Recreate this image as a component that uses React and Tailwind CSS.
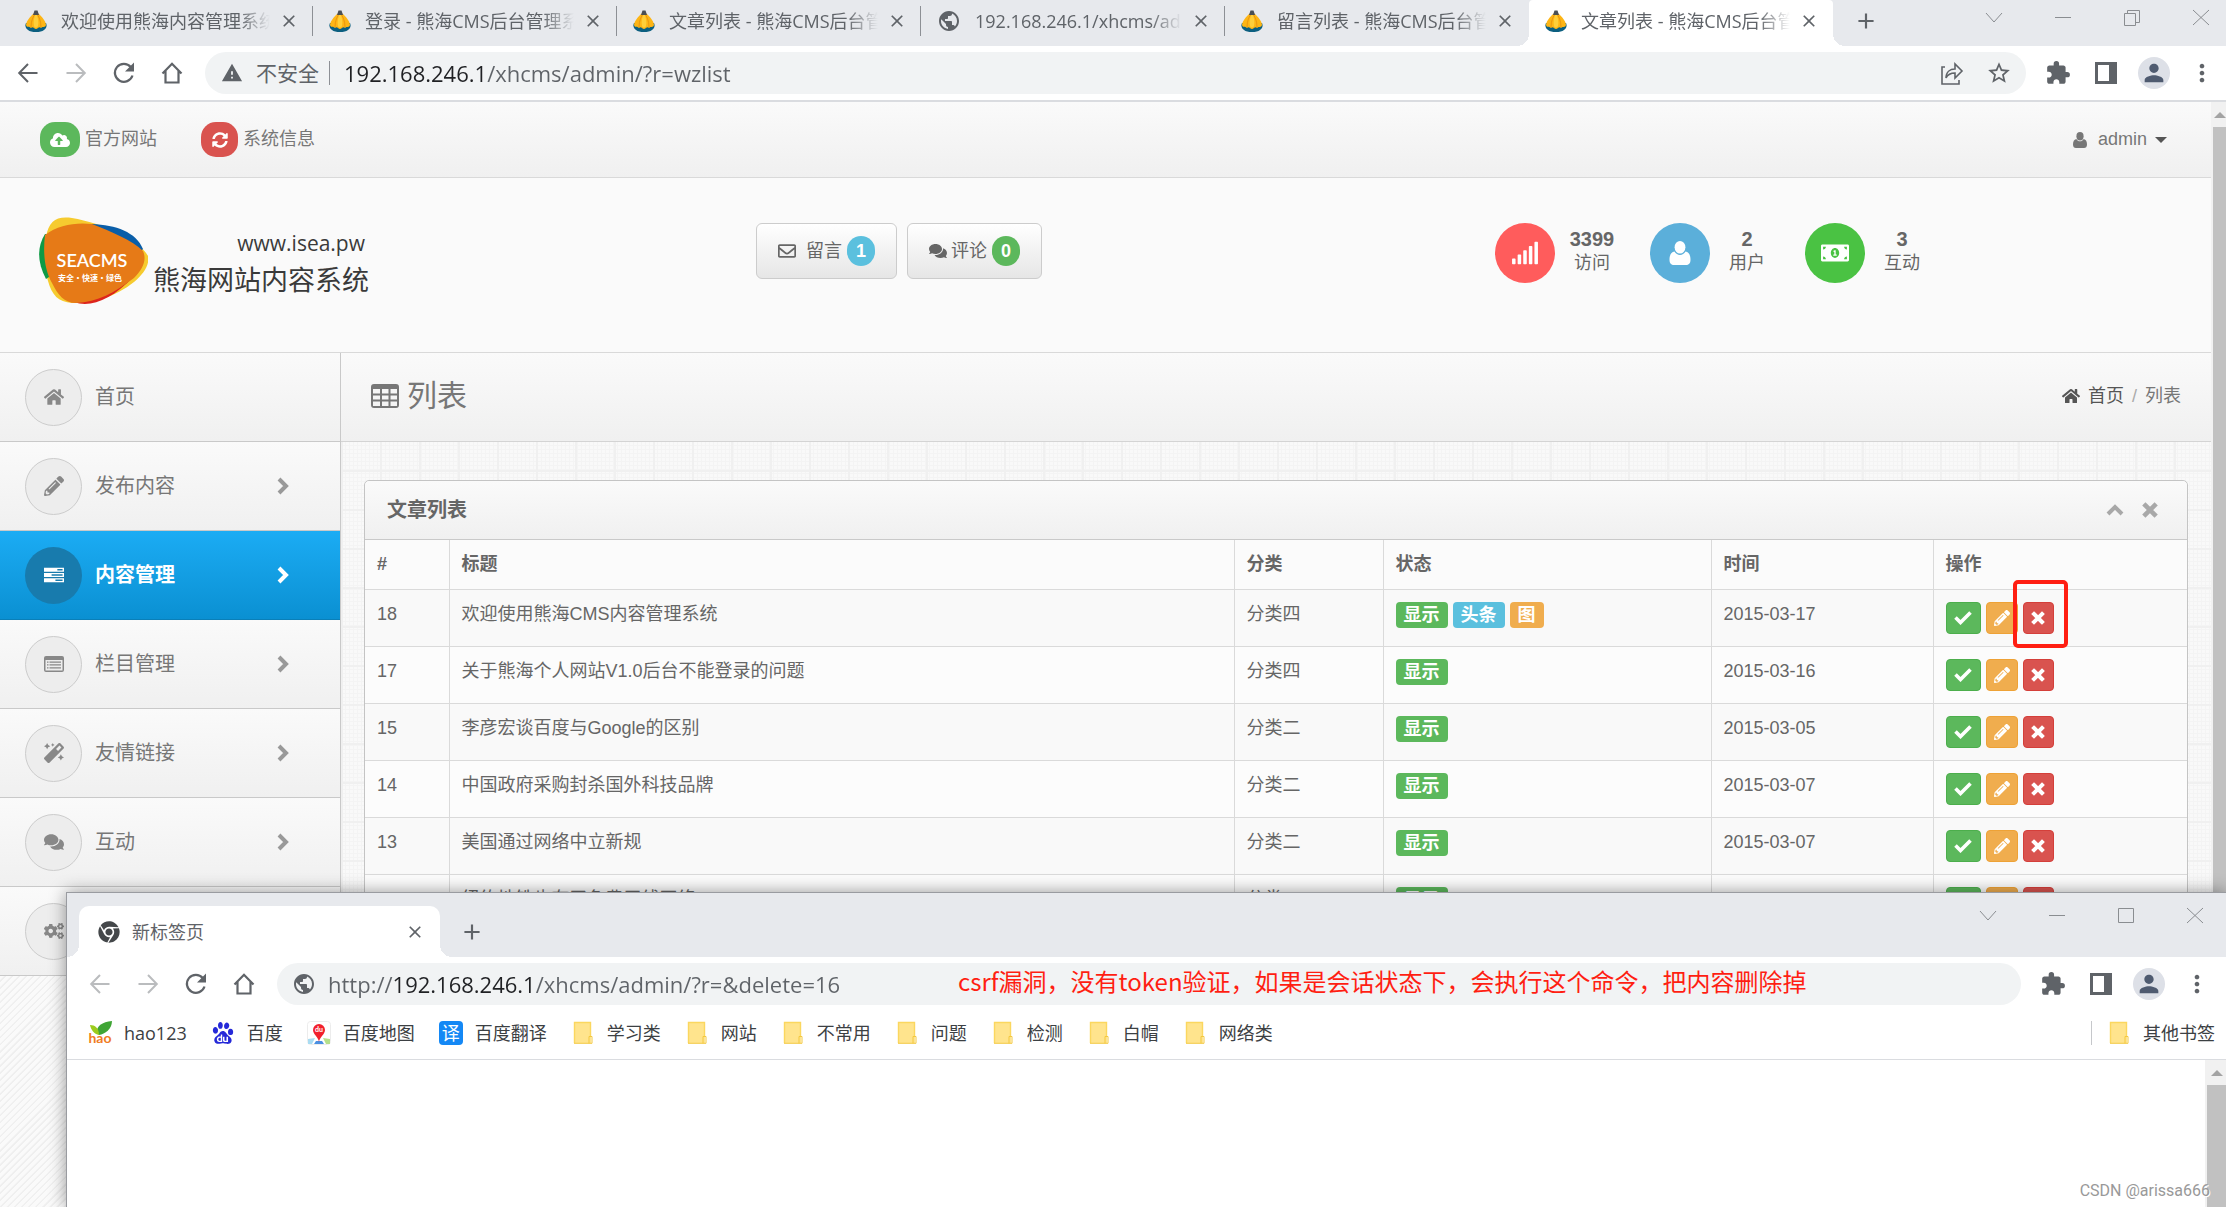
import {
  FaChrome,
  FaCloudUploadAlt,
  FaCogs,
  FaComments,
  FaHome,
  FaMagic,
  FaMoneyBillAlt,
  FaPencilAlt,
  FaRegEnvelope,
  FaSignal,
  FaSyncAlt,
} from "react-icons/fa";
import { MdAdd, MdClose, MdExtension, MdMoreVert, MdPerson, MdPublic, MdStarBorder, MdWarning } from "react-icons/md";
import { SiBaidu } from "react-icons/si";

const tabs = [
  { title: "欢迎使用熊海内容管理系统" },
  { title: "登录 - 熊海CMS后台管理系统" },
  { title: "文章列表 - 熊海CMS后台管理" },
  { title: "192.168.246.1/xhcms/admin", globe: true },
  { title: "留言列表 - 熊海CMS后台管理", last: true },
  { title: "文章列表 - 熊海CMS后台管理", active: true },
];

const menu = [
  { label: "首页", icon: FaHome, leaf: true },
  { label: "发布内容", icon: FaPencilAlt },
  { label: "内容管理", icon: TasksIcon, active: true },
  { label: "栏目管理", icon: ListAltIcon },
  { label: "友情链接", icon: FaMagic },
  { label: "互动", icon: FaComments },
  { label: "设置", icon: FaCogs },
];

const stats = [
  { value: "3399", label: "访问", icon: FaSignal, color: "bg-[#ff5c5c]" },
  { value: "2", label: "用户", icon: UserIcon, color: "bg-[#5bafda]" },
  { value: "3", label: "互动", icon: FaMoneyBillAlt, color: "bg-[#4ac243]" },
];

const articles = [
  { id: 18, title: "欢迎使用熊海CMS内容管理系统", category: "分类四", date: "2015-03-17", tags: ["显示", "头条", "图"] },
  { id: 17, title: "关于熊海个人网站V1.0后台不能登录的问题", category: "分类四", date: "2015-03-16", tags: ["显示"] },
  { id: 15, title: "李彦宏谈百度与Google的区别", category: "分类二", date: "2015-03-05", tags: ["显示"] },
  { id: 14, title: "中国政府采购封杀国外科技品牌", category: "分类二", date: "2015-03-07", tags: ["显示"] },
  { id: 13, title: "美国通过网络中立新规", category: "分类二", date: "2015-03-07", tags: ["显示"] },
  { id: 12, title: "纽约地铁也有了免费无线网络", category: "分类二", date: "2015-03-07", tags: ["显示"] },
];

const tagColors = {
  显示: "bg-[#5cb85c]",
  头条: "bg-[#5bc0de]",
  图: "bg-[#f0ad4e]",
};

const bookmarks = [
  { label: "hao123", icon: HaoIcon },
  { label: "百度", icon: BaiduIcon },
  { label: "百度地图", icon: MapIcon },
  { label: "百度翻译", icon: TranslateIcon },
  { label: "学习类", icon: FolderIcon },
  { label: "网站", icon: FolderIcon },
  { label: "不常用", icon: FolderIcon },
  { label: "问题", icon: FolderIcon },
  { label: "检测", icon: FolderIcon },
  { label: "白帽", icon: FolderIcon },
  { label: "网络类", icon: FolderIcon },
];

/* ---------- icons ---------- */

function Favicon() {
  return (
    <svg viewBox="0 0 22 22" className="size-[22px] shrink-0">
      <path d="M1 13c-2 4 1 9 10 9s12-5 10-9z" fill="#0c5f80" />
      <path d="M11 2C7 4 1 11 1 15c1 3 3 1 5 3 2-2 3 1 5 1s3-3 5-1c2-2 4 0 5-3 0-4-6-11-10-13z" fill="#fdb515" />
      <path d="M11 3c-2 4-3 9-2 13 1 2 3 2 4 0 1-4 0-9-2-13z" fill="#ffcf3a" />
      <path d="M11 3c-3 3-5 8-5 14M11 3c3 3 5 8 5 14" fill="none" stroke="#e58e0c" strokeWidth=".8" />
      <path d="M8 5 9.500.500h3L14 5z" fill="#4a4f55" />
    </svg>
  );
}

function BackIcon() {
  return (
    <svg viewBox="0 0 24 24" className="size-6" fill="none" stroke="currentColor" strokeWidth="2">
      <path d="M21.500 12h-18M12 3l-8.800 9 8.800 9" />
    </svg>
  );
}

function ForwardIcon() {
  return (
    <svg viewBox="0 0 24 24" className="size-6" fill="none" stroke="currentColor" strokeWidth="2">
      <path d="M2.500 12h18M12 3l8.800 9-8.800 9" />
    </svg>
  );
}

function ReloadIcon() {
  return (
    <svg viewBox="0 0 24 24" className="size-6">
      <path d="M20.500 14.500A9 9 0 1 1 18.800 6" fill="none" stroke="currentColor" strokeWidth="2.200" />
      <path d="M22 1.500v9h-9z" fill="currentColor" />
    </svg>
  );
}

function HomeOutlineIcon() {
  return (
    <svg viewBox="0 0 24 24" className="size-6" fill="none" stroke="currentColor" strokeWidth="2.200">
      <path d="M2.500 12.500 12 2.800l9.500 9.700M5.500 10v11.500h13V10" />
    </svg>
  );
}

function ShareIcon() {
  return (
    <svg viewBox="0 0 24 24" className="size-6" fill="none" stroke="currentColor" strokeWidth="1.600">
      <path d="M5 6H2v17h17v-4" />
      <path d="M6 17c0-6 4-9 9-9V3l7 7-7 7v-5c-4 0-7 1-9 5z" />
    </svg>
  );
}

function PanelIcon() {
  return (
    <svg viewBox="0 0 22 22" className="size-[22px]">
      <path d="M0 0h22v22H0zM3 3v16h11V3z" fill="currentColor" fillRule="evenodd" />
    </svg>
  );
}

function CheckIcon() {
  return (
    <svg viewBox="0 0 18 14" className="h-[14px] w-[18px]" fill="none" stroke="currentColor" strokeWidth="3.600">
      <path d="M1.500 6.500l5 5L16.500 1.500" />
    </svg>
  );
}

function CrossIcon({ className }) {
  return (
    <svg viewBox="0 0 14 14" className={className} fill="none" stroke="currentColor" strokeWidth="4" strokeLinecap="square">
      <path d="M3 3l8 8M11 3l-8 8" />
    </svg>
  );
}

function ChevronRightIcon({ className }) {
  return (
    <svg viewBox="0 0 12 18" className={className} fill="none" stroke="currentColor" strokeWidth="4">
      <path d="M2 2l7 7-7 7" />
    </svg>
  );
}

function ChevronUpIcon({ className }) {
  return (
    <svg viewBox="0 0 18 12" className={className} fill="none" stroke="currentColor" strokeWidth="4">
      <path d="M2 10l7-7 7 7" />
    </svg>
  );
}

function UserIcon({ className }) {
  return (
    <svg viewBox="0 0 16 16" className={className} fill="currentColor">
      <ellipse cx="8" cy="4.200" rx="3.600" ry="4.200" />
      <path d="M4.300 7C2 7.500 1 9.500 1 12.500 1 15 2.200 16 4 16h8c1.800 0 3-1 3-3.500 0-3-1-5-3.300-5.500-1 1.500-2.200 2.300-3.700 2.300S5.300 8.500 4.300 7z" />
    </svg>
  );
}

function TasksIcon({ className }) {
  return (
    <svg viewBox="0 0 21 16" className={className} fill="currentColor">
      <path
        fillRule="evenodd"
        d="M0 .5h21v4H0zm14 1.300v1.400h5.500V1.800zM0 6h21v4H0zm8 1.300v1.400h11.500V7.300zM0 11.500h21v4H0zm12 1.300v1.400h7.500v-1.400z"
      />
    </svg>
  );
}

function ListAltIcon({ className }) {
  return (
    <svg viewBox="0 0 20 16" className={className} fill="currentColor">
      <path
        fillRule="evenodd"
        d="M2 0h16a2 2 0 0 1 2 2v12a2 2 0 0 1-2 2H2a2 2 0 0 1-2-2V2a2 2 0 0 1 2-2zM1.500 4v10.500h17V4zM3 5.500h1.500v1.300H3zm2.500 0H17v1.300H5.500zM3 8.300h1.500v1.300H3zm2.500 0H17v1.300H5.500zM3 11.200h1.500v1.300H3zm2.500 0H17v1.300H5.500z"
      />
    </svg>
  );
}

function TableIcon() {
  return (
    <svg viewBox="0 0 28 24" className="h-6 w-7" fill="currentColor">
      <path
        fillRule="evenodd"
        d="M3 0h22a3 3 0 0 1 3 3v18a3 3 0 0 1-3 3H3a3 3 0 0 1-3-3V3a3 3 0 0 1 3-3zM2 5v4.500h7V5zm9 0v4.500h6.500V5zm8.500 0v4.500H26V5zM2 11.500v4h7v-4zm9 0v4h6.500v-4zm8.500 0v4H26v-4zM2 17.500V22h7v-4.500zm9 0V22h6.500v-4.500zm8.500 0V22H26v-4.500z"
      />
    </svg>
  );
}

function Logo() {
  return (
    <svg viewBox="0 0 110 88" className="h-[88px] w-[110px]">
      <path d="M8 20C11 4 18-1 34 1c30 5 68 22 76 38 2 8-4 18-14 26-20 16-44 22-62 21C20 85 14 78 10 64 5 48 4 36 8 20z" fill="#f6cb2f" />
      <path d="M7 17C-1 30-1 45 8 62l6-4V18z" fill="#0d9a45" />
      <path d="M54 7c24 1 44 8 51 25l-4 4C86 24 70 16 52 10z" fill="#0a5ea8" />
      <path d="M36 85c16 6 38-2 60-26l-8-4-54 26z" fill="#dd241c" />
      <path d="M7 18C20 8 38 5 54 7c20 8 40 16 51 27 4 9 0 18-9 27-20 15-36 24-58 25-12 0-18-8-24-20C6 52 5 34 7 18z" fill="#e67a17" />
      <text x="54" y="50" textAnchor="middle" fill="#fff" fontSize="18" fontWeight="600" fontFamily="Lato, sans-serif">
        SEACMS
      </text>
      <text x="52" y="64" textAnchor="middle" fill="#fff" fontSize="8" fontWeight="700" fontFamily="'Noto Sans CJK SC', sans-serif">
        安全•快速•绿色
      </text>
    </svg>
  );
}

function HaoIcon() {
  return (
    <svg viewBox="0 0 24 24" className="size-6">
      <path d="M9 12C8 5 14 1 24 0c0 8-7 13-13 14z" fill="#3fa535" />
      <path d="M2 4c5 0 9 3 9 10C6 13 3 9 2 4z" fill="#9ccb1c" />
      <text x="12" y="22" textAnchor="middle" fill="#f07c22" fontSize="14" fontWeight="700" fontFamily="Lato, sans-serif">
        hao
      </text>
    </svg>
  );
}

function BaiduIcon() {
  return <SiBaidu className="size-[22px] text-[#2529d8]" />;
}

function MapIcon() {
  return (
    <svg viewBox="0 0 24 24" className="size-6">
      <rect x=".5" y=".5" width="23" height="23" rx="3" fill="#fff" stroke="#ececec" />
      <path d="M1 18l7-1-3 6H1z" fill="#a9dcf2" />
      <path d="M23 18l-7-1 3 6h4z" fill="#b5e08a" />
      <path d="M9 20h6l2 3H7z" fill="#4a90e2" />
      <path d="M12 3a6 6 0 0 0-6 6c0 4.500 5.500 7 6 12 .5-5 6-7.500 6-12a6 6 0 0 0-6-6z" fill="#f2202c" />
      <text x="12" y="11" textAnchor="middle" fill="#fff" fontSize="7" fontWeight="700" fontFamily="Lato, sans-serif">
        du
      </text>
    </svg>
  );
}

function TranslateIcon() {
  return (
    <span className="flex size-6 items-center justify-center rounded-[4px] bg-[#1488f5] text-[18px] leading-6 text-white">译</span>
  );
}

function FolderIcon() {
  return (
    <svg viewBox="0 0 24 24" className="size-6">
      <path d="M3 1h17v21H3z" fill="#ffe48d" />
      <path d="M3.500 22V1.500h16V15" fill="none" stroke="#fbd75f" strokeWidth="1.400" />
      <path d="M3 22.300h18v-6.800h-3v6.800" fill="none" stroke="#f3c83f" />
    </svg>
  );
}

/* ---------- browser chrome ---------- */

function WindowControls({ restored }) {
  return (
    <div className="flex gap-[49px] text-[#8a8d91]">
      {[
        <path key="menu" d="M2 5l8 9 8-9" />,
        <path key="min" d="M2 9.500h16" />,
        restored ? (
          <path key="max" d="M2.500 5.500h11v12h-11zM5.500 5V2.500h12v12H14" />
        ) : (
          <path key="max" d="M2.500 2.500h15v14h-15z" />
        ),
        <path key="close" d="M2 2l16 15M18 2L2 17" />,
      ].map((shape) => (
        <button key={shape.key} type="button" aria-label={shape.key}>
          <svg viewBox="0 0 20 18" className="h-[18px] w-5" fill="none" stroke="currentColor">
            {shape}
          </svg>
        </button>
      ))}
    </div>
  );
}

function NavButtons({ canGoBack }) {
  return (
    <div className="mr-[9px] flex text-[#5f6368]">
      <button type="button" aria-label="back" className={canGoBack ? "flex w-12 justify-center" : "flex w-12 justify-center text-[#babcbe]"}>
        <BackIcon />
      </button>
      <button type="button" aria-label="forward" className="flex w-12 justify-center text-[#babcbe]">
        <ForwardIcon />
      </button>
      <button type="button" aria-label="reload" className="flex w-12 justify-center">
        <ReloadIcon />
      </button>
      <button type="button" aria-label="home" className="flex w-12 justify-center">
        <HomeOutlineIcon />
      </button>
    </div>
  );
}

function ToolbarActions() {
  return (
    <div className="ml-2 flex items-center text-[#5f6368]">
      <button type="button" aria-label="extensions" className="flex w-12 justify-center">
        <MdExtension className="size-[26px]" />
      </button>
      <button type="button" aria-label="side panel" className="flex w-12 justify-center">
        <PanelIcon />
      </button>
      <button type="button" aria-label="profile" className="flex w-12 justify-center">
        <span className="flex size-8 items-center justify-center rounded-full bg-[#dde0e7]">
          <MdPerson className="size-7 text-[#4f5b70]" />
        </span>
      </button>
      <button type="button" aria-label="more" className="flex w-12 justify-center">
        <MdMoreVert className="size-7" />
      </button>
    </div>
  );
}

function Scrollbar() {
  return (
    <div className="flex flex-1 flex-col bg-[#f1f1f1] pl-[2px]">
      <div className="flex h-[25px] items-center justify-center">
        <svg viewBox="0 0 12 6" className="h-[6px] w-3">
          <path d="M0 6l6-6 6 6z" fill="#a3a3a3" />
        </svg>
      </div>
      <div className="flex-1 bg-[#c1c1c1]" />
    </div>
  );
}

function TabStrip() {
  return (
    <div className="flex h-[46px] shrink-0 bg-[#e7e9ed] pl-[9px]">
      {tabs.map((tab, i) => (
        <div
          key={i}
          className={
            tab.active
              ? "relative flex w-[304px] items-center rounded-t bg-white pb-1 pl-4 before:absolute before:bottom-0 before:-left-3 before:size-3 before:bg-[radial-gradient(circle_at_0_0,transparent_12px,#fff_12px)] after:absolute after:-right-3 after:bottom-0 after:size-3 after:bg-[radial-gradient(circle_at_100%_0,transparent_12px,#fff_12px)]"
              : "flex w-[304px] items-center pb-1 pl-4"
          }
        >
          {tab.globe ? <MdPublic className="size-6 shrink-0 text-[#5f6368]" /> : <Favicon />}
          <span className="ml-[14px] flex-1 overflow-hidden text-[18px] leading-6 whitespace-nowrap text-[#5f6368] [mask-image:linear-gradient(to_right,#000_85%,transparent)]">
            {tab.title}
          </span>
          <button type="button" aria-label="close tab" className="mr-[13px] ml-[9px] text-[#5f6368]">
            <MdClose className="size-5" />
          </button>
          <span className={tab.active || tab.last ? "h-[30px] w-px" : "h-[30px] w-px bg-[#8d9095]"} />
        </div>
      ))}
      <button type="button" aria-label="new tab" className="ml-5 flex items-center pb-1 text-[#5f6368]">
        <MdAdd className="size-[26px]" />
      </button>
      <div className="ml-auto pt-2 pr-[15px]">
        <WindowControls restored />
      </div>
    </div>
  );
}

/* ---------- admin page ---------- */

function TopBar() {
  return (
    <div className="flex h-[76px] items-center border-b border-[#d9d9d9] bg-linear-to-b from-[#fafafa] to-[#f0f0f0] px-10 text-[18px] text-[#777]">
      <a href="#" className="flex items-center gap-[5px]">
        <span className="flex h-[35px] w-10 items-center justify-center rounded-[15px] bg-[#5cb85c] text-white">
          <FaCloudUploadAlt className="size-5" />
        </span>
        官方网站
      </a>
      <a href="#" className="ml-11 flex items-center gap-[5px]">
        <span className="flex h-[35px] w-[37px] items-center justify-center rounded-[15px] bg-[#d9534f] text-white">
          <FaSyncAlt className="size-4" />
        </span>
        系统信息
      </a>
      <button type="button" className="mr-1 ml-auto flex items-center">
        <UserIcon className="size-4" />
        <span className="ml-[10px]">admin</span>
        <svg viewBox="0 0 12 6" className="ml-2 h-[6px] w-3">
          <path d="M0 0h12L6 6z" fill="#555" />
        </svg>
      </button>
    </div>
  );
}

function Header() {
  return (
    <div className="grid h-[175px] grid-cols-3 items-start border-b border-[#d9d9d9] bg-[#fafafa]">
      <div className="flex pt-[39px] pl-[38px]">
        <Logo />
        <div className="ml-[5px] flex flex-col items-end pt-2 text-[#3a3a3a]">
          <span className="pr-1 font-['Open_Sans',sans-serif] text-[21px] leading-9">www.isea.pw</span>
          <span className="text-[27px] leading-10">熊海网站内容系统</span>
        </div>
      </div>
      <div className="flex gap-[10px] pt-[45px] pl-[19px] text-[18px] text-[#666]">
        <button type="button" className="flex h-14 items-center rounded-[6px] border border-[#ccc] bg-linear-to-b from-white to-[#e6e6e6] px-[21px]">
          <FaRegEnvelope className="mr-[10px] size-[18px]" />
          留言
          <span className="ml-[5px] flex h-[30px] w-7 items-center justify-center rounded-full bg-[#5bc0de] font-bold text-white">1</span>
        </button>
        <button type="button" className="flex h-14 items-center rounded-[6px] border border-[#ccc] bg-linear-to-b from-white to-[#e6e6e6] px-[21px]">
          <FaComments className="mr-1 size-[18px]" />
          评论
          <span className="ml-[5px] flex h-[30px] w-7 items-center justify-center rounded-full bg-[#5cb85c] font-bold text-white">0</span>
        </button>
      </div>
      <div className="flex pt-[45px] pl-[21px] text-[#666]">
        {stats.map((stat) => (
          <div key={stat.label} className="flex w-[155px]">
            <span className={`flex size-[60px] items-center justify-center rounded-full text-white ${stat.color}`}>
              <stat.icon className={stat.icon === UserIcon ? "size-6" : "size-7"} />
            </span>
            <div className="flex w-[74px] flex-col items-center pt-1">
              <strong className="text-[20px] leading-6">{stat.value}</strong>
              <span className="text-[18px] leading-6">{stat.label}</span>
            </div>
          </div>
        ))}
      </div>
    </div>
  );
}

function Sidebar() {
  return (
    <nav className="w-[341px] shrink-0 border-r border-[#c9c9c9] bg-[#fafafa] bg-[repeating-linear-gradient(135deg,#fafafa_0px,#fafafa_3px,#efefef_4px,#efefef_5px)]">
      {menu.map((item) => (
        <a
          key={item.label}
          href="#"
          className={
            item.active
              ? "flex h-[89px] items-center border-b border-[#0a7fb8] bg-linear-to-b from-[#1bacf4] to-[#0a90d2] pr-[51px] pl-[25px] font-bold text-white"
              : "flex h-[89px] items-center border-b border-[#c9c9c9] bg-linear-to-b from-[#fafafa] to-[#f0f0f0] pr-[51px] pl-[25px] text-[#777]"
          }
        >
          <span
            className={
              item.active
                ? "flex size-[57px] items-center justify-center rounded-full bg-[#187bad]"
                : "flex size-[57px] items-center justify-center rounded-full border border-[#ccc] bg-[#ededed] text-[#888]"
            }
          >
            <item.icon className="size-5" />
          </span>
          <span className="ml-[13px] text-[20px] leading-7">{item.label}</span>
          {!item.leaf && <ChevronRightIcon className={item.active ? "ml-auto h-[18px] w-3" : "ml-auto h-[18px] w-3 text-[#999]"} />}
        </a>
      ))}
    </nav>
  );
}

function ArticleRow({ article, marked }) {
  return (
    <tr className="border-t border-[#dadada] odd:bg-[#f9f9f9] even:bg-[#fcfcfc]">
      <td className="h-[57px] px-3 py-[11px] align-top">{article.id}</td>
      <td className="border-l border-[#dadada] px-3 py-[11px] align-top">{article.title}</td>
      <td className="border-l border-[#dadada] px-3 py-[11px] align-top">{article.category}</td>
      <td className="border-l border-[#dadada] px-3 pt-3 align-top">
        <div className="flex gap-[5px]">
          {article.tags.map((tag) => (
            <span key={tag} className={`rounded-[4px] px-2 text-[18px] leading-[26px] font-bold text-white ${tagColors[tag]}`}>
              {tag}
            </span>
          ))}
        </div>
      </td>
      <td className="border-l border-[#dadada] px-3 py-[11px] align-top">{article.date}</td>
      <td className="border-l border-[#dadada] px-3 pt-3 align-top">
        <div className="flex gap-[5px] text-white">
          <button type="button" aria-label="显示" className="flex h-8 w-[35px] items-center justify-center rounded-[4px] border border-[#4cae4c] bg-[#5cb85c]">
            <CheckIcon />
          </button>
          <button type="button" aria-label="编辑" className="flex h-8 w-8 items-center justify-center rounded-[4px] border border-[#eea236] bg-[#f0ad4e]">
            <FaPencilAlt className="size-4" />
          </button>
          <div className="relative">
            <button type="button" aria-label="删除" className="flex h-8 w-[31px] items-center justify-center rounded-[4px] border border-[#d43f3a] bg-[#d9534f]">
              <CrossIcon className="size-[14px]" />
            </button>
            {marked && <div className="absolute -top-[22px] -right-[14px] -bottom-[14px] -left-[10px] rounded-[5px] border-4 border-[#ff1e12]" />}
          </div>
        </div>
      </td>
    </tr>
  );
}

function ArticlePanel() {
  return (
    <section className="mx-[23px] mt-[38px] rounded-t-[5px] border border-[#c4c4c4] bg-[#fbfbfb]">
      <div className="flex h-[59px] items-center rounded-t-[5px] border-b border-[#c9c9c9] bg-linear-to-b from-[#fafafa] to-[#f0f0f0] pr-[29px] pl-[22px]">
        <h3 className="text-[20px] leading-7 font-bold text-[#666]">文章列表</h3>
        <div className="ml-auto flex items-center gap-[18px] text-[#a8a8a8]">
          <button type="button" aria-label="collapse">
            <ChevronUpIcon className="h-3 w-[18px]" />
          </button>
          <button type="button" aria-label="close">
            <CrossIcon className="size-4" />
          </button>
        </div>
      </div>
      <table className="w-full table-fixed text-left text-[18px] leading-[26px] text-[#666]">
        <colgroup>
          <col className="w-[84px]" />
          <col />
          <col className="w-[149px]" />
          <col className="w-[328px]" />
          <col className="w-[222px]" />
          <col className="w-[254px]" />
        </colgroup>
        <thead>
          <tr className="h-[49px]">
            <th className="px-3">#</th>
            <th className="border-l border-[#dadada] px-3">标题</th>
            <th className="border-l border-[#dadada] px-3">分类</th>
            <th className="border-l border-[#dadada] px-3">状态</th>
            <th className="border-l border-[#dadada] px-3">时间</th>
            <th className="border-l border-[#dadada] px-3">操作</th>
          </tr>
        </thead>
        <tbody>
          {articles.map((article) => (
            <ArticleRow key={article.id} article={article} marked={article.id === 18} />
          ))}
        </tbody>
      </table>
    </section>
  );
}

function AdminPage() {
  return (
    <div className="flex min-h-0 flex-1 flex-col overflow-hidden font-['Liberation_Sans','Noto_Sans_CJK_SC',sans-serif]">
      <TopBar />
      <Header />
      <div className="flex min-h-0 flex-1">
        <Sidebar />
        <main className="min-w-0 flex-1 bg-[#f9f9f9] bg-[linear-gradient(#f0f0f0_2px,transparent_2px),linear-gradient(90deg,#f0f0f0_2px,transparent_2px),linear-gradient(#f4f4f4_1px,transparent_1px),linear-gradient(90deg,#f4f4f4_1px,transparent_1px)] bg-[size:39px_39px,39px_39px,4px_4px,4px_4px]">
          <div className="flex h-[89px] items-center border-b border-[#d4d4d4] bg-linear-to-b from-[#fafafa] to-[#f0f0f0] px-[30px] pb-[2px] text-[#777]">
            <h1 className="flex items-center gap-2 text-[30px] leading-10">
              <TableIcon />
              列表
            </h1>
            <div className="ml-auto flex items-center gap-2 text-[18px] leading-6">
              <a href="#" className="flex items-center gap-2 text-[#555]">
                <FaHome className="size-[18px]" />
                首页
              </a>
              <span className="text-[#aaa]">/</span>
              <span>列表</span>
            </div>
          </div>
          <ArticlePanel />
        </main>
      </div>
    </div>
  );
}

/* ---------- second browser window ---------- */

function NewTabWindow() {
  return (
    <div className="absolute top-[892px] right-0 bottom-0 left-[66px] flex flex-col border-t border-l border-[#999ba0] bg-white shadow-[0_0_16px_rgba(0,0,0,0.4)]">
      <div className="flex h-16 shrink-0 bg-[#e7e9ed] pl-3">
        <div className="relative mt-[13px] flex w-[361px] items-center rounded-t-[10px] bg-white pl-[19px] before:absolute before:bottom-0 before:-left-3 before:size-3 before:bg-[radial-gradient(circle_at_0_0,transparent_12px,#fff_12px)] after:absolute after:-right-3 after:bottom-0 after:size-3 after:bg-[radial-gradient(circle_at_100%_0,transparent_12px,#fff_12px)]">
          <FaChrome className="size-[22px] text-[#44474a]" />
          <span className="ml-3 text-[18px] leading-6 text-[#5f6368]">新标签页</span>
          <button type="button" aria-label="close tab" className="mr-[15px] ml-auto text-[#5f6368]">
            <MdClose className="size-5" />
          </button>
        </div>
        <button type="button" aria-label="new tab" className="mt-[13px] ml-[19px] flex items-center text-[#5f6368]">
          <MdAdd className="size-[26px]" />
        </button>
        <div className="ml-auto pt-[13px] pr-[21px]">
          <WindowControls />
        </div>
      </div>
      <div className="flex h-[54px] shrink-0 items-center pr-[5px] pb-px pl-[9px]">
        <NavButtons />
        <div className="relative flex h-[42px] flex-1 items-center rounded-full bg-[#f1f3f4] px-[15px]">
          <MdPublic className="size-6 text-[#5f6368]" />
          <input
            type="text"
            aria-label="address"
            defaultValue="http://192.168.246.1/xhcms/admin/?r=&delete=16"
            className="ml-3 flex-1 bg-transparent bg-[linear-gradient(to_right,#5f6368_65px,#202124_65px,#202124_208px,#5f6368_208px)] bg-clip-text text-[22px] leading-7 text-transparent outline-none"
          />
          <div className="absolute top-[2px] left-[681px] font-['Noto_Sans_CJK_SC',sans-serif] text-[24px] leading-8 whitespace-nowrap text-[#ff1e12]">
            csrf漏洞，没有token验证，如果是会话状态下，会执行这个命令，把内容删除掉
          </div>
        </div>
        <ToolbarActions />
      </div>
      <div className="flex h-[49px] shrink-0 items-center border-b border-[#dadce0] pr-[11px] pb-[5px] pl-[21px] text-[18px] leading-6 text-[#3c4043]">
        {bookmarks.map((item) => (
          <a key={item.label} href="#" className="mr-6 flex items-center gap-3">
            <span className="flex w-6 justify-center">
              <item.icon />
            </span>
            {item.label}
          </a>
        ))}
        <span className="mr-[15px] ml-auto h-6 w-px bg-[#c6c8cb]" />
        <a href="#" className="flex items-center gap-3">
          <FolderIcon />
          其他书签
        </a>
      </div>
      <div className="flex min-h-0 flex-1">
        <div className="flex-1" />
        <div className="flex w-[21px]">
          <Scrollbar />
        </div>
      </div>
    </div>
  );
}

export default function App() {
  return (
    <div className="relative flex h-screen flex-col overflow-hidden bg-white font-['Open_Sans','Noto_Sans_CJK_SC',sans-serif]">
      <TabStrip />
      <div className="flex h-[56px] shrink-0 items-center border-b-2 border-[#dadce0] pl-1">
        <NavButtons canGoBack />
        <div className="flex h-[42px] flex-1 items-center rounded-full bg-[#f1f3f4] pr-[14px] pl-4 text-[#5f6368]">
          <MdWarning className="size-[22px]" />
          <span className="ml-[13px] text-[21px] leading-7">不安全</span>
          <span className="mx-[10px] h-6 w-px bg-[#8d9095]" />
          <input
            type="text"
            aria-label="address"
            defaultValue="192.168.246.1/xhcms/admin/?r=wzlist"
            className="ml-1 flex-1 bg-transparent bg-[linear-gradient(to_right,#202124_143px,#5f6368_143px)] bg-clip-text text-[22px] leading-7 text-transparent outline-none"
          />
          <button type="button" aria-label="share" className="mr-[22px]">
            <ShareIcon />
          </button>
          <button type="button" aria-label="bookmark">
            <MdStarBorder className="size-[26px]" />
          </button>
        </div>
        <ToolbarActions />
      </div>
      <div className="flex min-h-0 flex-1">
        <AdminPage />
        <div className="flex w-[15px]">
          <Scrollbar />
        </div>
      </div>
      <NewTabWindow />
      <div className="absolute right-4 bottom-1 font-['Roboto',sans-serif] text-[16px] leading-6 text-[#999] [text-shadow:1px_1px_0_#fff]">
        CSDN @arissa666
      </div>
    </div>
  );
}
